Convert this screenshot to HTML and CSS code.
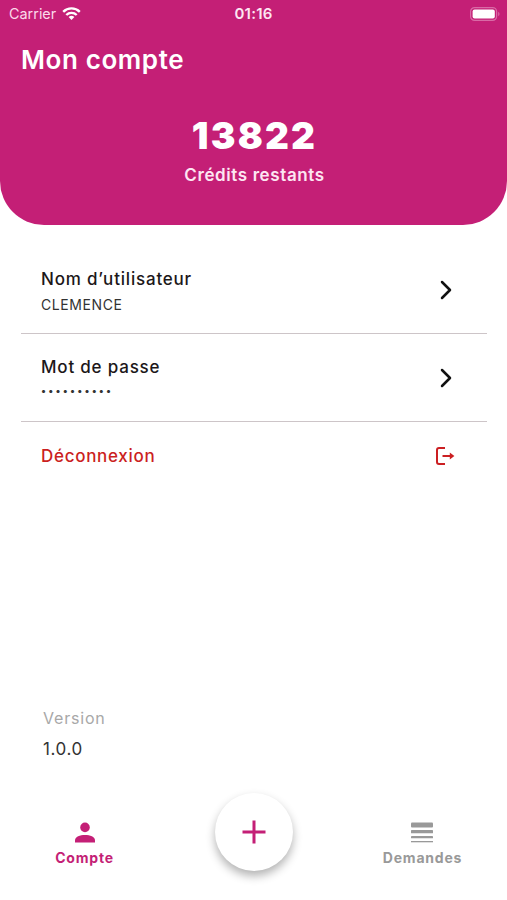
FILE: index.html
```html
<!DOCTYPE html>
<html lang="fr">
<head>
    <meta charset="UTF-8">
    <meta name="viewport" content="width=device-width, initial-scale=1.0">
    <title>Mon compte</title>
    <link rel="stylesheet" href="styles.css">
</head>
<body>
    <div class="screen">
        <header>
            <div class="status-bar">
                <div class="carrier">
                    <span>Carrier</span>
                    <svg width="19" height="14" viewBox="0 0 19 14" fill="none" stroke="#fff" stroke-width="2.4">
                        <path d="M1.2 4.8a11.8 11.8 0 0 1 16.6 0"/>
                        <path d="M4.3 8a7.4 7.4 0 0 1 10.4 0"/>
                        <path d="M9.5 13L6.6 10.1a4.1 4.1 0 0 1 5.8 0z" fill="#fff" stroke="none"/>
                    </svg>
                </div>
                <span class="time">01:16</span>
                <svg class="battery" width="30" height="14" viewBox="0 0 30 14">
                    <rect x="0.6" y="0.6" width="26" height="12.8" rx="4" fill="none" stroke="#d96aa6" stroke-width="1.2"/>
                    <rect x="2.6" y="2.4" width="22.2" height="9" rx="2" fill="#fff"/>
                    <path d="M28.2 4.8a2.5 2.5 0 0 1 0 4.4z" fill="#d96aa6"/>
                </svg>
            </div>
            <h1>Mon compte</h1>
            <div class="credits">
                <p class="credits-count">13822</p>
                <p class="credits-label">Crédits restants</p>
            </div>
        </header>

        <main>
            <div class="row">
                <div>
                    <p class="row-title">Nom d’utilisateur</p>
                    <p class="row-value">CLEMENCE</p>
                </div>
                <svg width="12" height="20" viewBox="0 0 12 20" fill="none" stroke="#111" stroke-width="2.5" stroke-linecap="round" stroke-linejoin="round">
                    <path d="M2 2l8 8-8 8"/>
                </svg>
            </div>
            <div class="row">
                <div>
                    <p class="row-title">Mot de passe</p>
                    <p class="row-value password">••••••••••</p>
                </div>
                <svg width="12" height="20" viewBox="0 0 12 20" fill="none" stroke="#111" stroke-width="2.5" stroke-linecap="round" stroke-linejoin="round">
                    <path d="M2 2l8 8-8 8"/>
                </svg>
            </div>
            <div class="row logout">
                <p class="row-title">Déconnexion</p>
                <svg width="19" height="18" viewBox="0 0 19 18" fill="none" stroke="#cb1f22" stroke-width="2">
                    <path d="M9 1H3a2 2 0 0 0-2 2v12a2 2 0 0 0 2 2h6"/>
                    <path d="M6.5 9h8"/>
                    <path d="M13.8 5.6L18.4 9l-4.6 3.4z" fill="#cb1f22" stroke="none"/>
                </svg>
            </div>
        </main>

        <div class="version">
            <p class="version-label">Version</p>
            <p class="version-number">1.0.0</p>
        </div>

        <nav>
            <a class="tab active">
                <svg width="20" height="21" viewBox="0 0 20 21" fill="#c41f76">
                    <circle cx="10" cy="5.4" r="4.8"/>
                    <path d="M0 20.4v-2.2c0-3.5 5-5.3 10-5.3s10 1.8 10 5.3v2.2z"/>
                </svg>
                <span>Compte</span>
            </a>
            <a class="add">
                <svg width="24" height="24" viewBox="0 0 24 24" stroke="#c41f76" stroke-width="3">
                    <path d="M12 0.5v23M0.5 12h23"/>
                </svg>
            </a>
            <a class="tab">
                <svg width="22" height="21" viewBox="0 0 22 21" fill="#999">
                    <rect y="0.5" width="22" height="5" rx="1"/>
                    <rect y="8" width="22" height="3.3" rx="0.6"/>
                    <rect y="14" width="22" height="2.3" rx="0.4"/>
                    <rect y="19" width="22" height="1.3"/>
                </svg>
                <span>Demandes</span>
            </a>
        </nav>
    </div>
</body>
</html>
```
FILE: styles.css
```css
body {
    margin: 0;
    font-family: Inter, sans-serif;
    background-color: #fff;
}

h1, p {
    margin: 0;
}

svg {
    display: block;
}

.screen {
    display: flex;
    flex-direction: column;
    height: 900px;
    overflow: hidden;
}

/* pink header */
header {
    box-sizing: border-box;
    height: 225.4px;
    background-color: #c41f76;
    border-radius: 0 0 44px 44px;
    color: #fff;
}

.status-bar {
    display: grid;
    grid-template-columns: 1fr auto 1fr;
    align-items: center;
    height: 27px;
    padding: 0 7px 0 9px;
    font-size: 15px;
}

.carrier {
    display: flex;
    align-items: center;
    gap: 6px;
    font-size: 14.4px;
    color: #fbd9ea;
}

.time {
    margin-right: 2px;
    font-weight: 600;
    letter-spacing: 0.2px;
    color: #fde6f2;
}

.battery {
    justify-self: end;
}

h1 {
    padding: 17px 21px 0;
    font-size: 26px;
    line-height: 32px;
    font-weight: 600;
    letter-spacing: 0.6px;
}

.credits {
    padding: 37px 0 0 2px;
    text-align: center;
}

.credits-count {
    font-size: 37px;
    line-height: 46px;
    font-weight: 900;
    letter-spacing: 2.2px;
}

.credits-label {
    margin-top: 5px;
    font-size: 17px;
    line-height: 22px;
    font-weight: 600;
    letter-spacing: 0.6px;
    color: #fde6f2;
}

/* account rows */
main {
    padding: 20.6px 20px 0 21px;
}

.row {
    display: flex;
    align-items: center;
    justify-content: space-between;
    box-sizing: border-box;
    height: 88px;
    padding: 1px 35px 0 20px;
    border-bottom: 1px solid #cdc5c8;
}

.row-title {
    padding-top: 3px;
    font-size: 17px;
    line-height: 24px;
    font-weight: 500;
    letter-spacing: 0.8px;
    color: #1c1719;
}

.row-value {
    margin-top: 3px;
    font-size: 14px;
    line-height: 22px;
    letter-spacing: 0.6px;
    color: #333;
}

.password {
    margin-top: 0;
    padding-bottom: 3px;
    font-size: 10px;
    font-weight: 600;
    letter-spacing: 2.2px;
}

.logout {
    height: 68px;
    padding-top: 0;
    padding-right: 32px;
    border-bottom: none;
}

.logout .row-title {
    padding-top: 0;
    letter-spacing: 0.7px;
    color: #cb1f22;
}

.version {
    margin-top: auto;
    padding: 0 43px 28px;
    font-size: 16px;
    line-height: 31px;
}

.version-label {
    color: #a8a8a8;
    letter-spacing: 0.8px;
}

.version-number {
    font-size: 17px;
    letter-spacing: 0.6px;
    color: #333;
}

/* bottom navigation */
nav {
    display: grid;
    grid-template-columns: 1fr 1fr 1fr;
    justify-items: center;
    height: 107px;
}

.tab {
    display: flex;
    flex-direction: column;
    align-items: center;
    padding-top: 29px;
    font-size: 14px;
    line-height: 20px;
    font-weight: 700;
    letter-spacing: 0.8px;
    color: #999;
}

.tab span {
    margin-top: 5px;
}

.active {
    color: #c41f76;
}

.add {
    display: flex;
    align-items: center;
    justify-content: center;
    width: 78px;
    height: 78px;
    border-radius: 50%;
    background-color: #fff;
    box-shadow: 0 5px 10px rgba(0, 0, 0, 0.3);
}
```
